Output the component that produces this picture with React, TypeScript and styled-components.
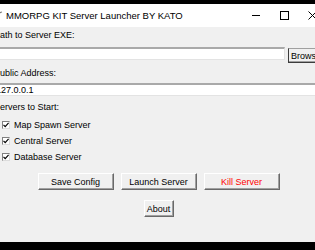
import React from "react";
import styled, { createGlobalStyle } from "styled-components";

const Global = createGlobalStyle`
  html, body { margin: 0; padding: 0; background: #000; }
  body { width: 315px; height: 250px; overflow: hidden; }
  #root { width: 315px; height: 250px; overflow: hidden; }
`;

const Screen = styled.div`
  width: 315px;
  height: 250px;
  overflow: hidden;
  background: #000;
  display: flex;
  flex-direction: column;
  padding-top: 4px;
  box-sizing: border-box;
  font-family: "Liberation Sans Narrow", "Liberation Sans", Arial, sans-serif;
  font-size: 9px;
  color: #000;
`;

const Window = styled.div`
  margin-left: -9px;
  width: 335px;
  height: 238px;
  flex: none;
  background: #f0f0f0;
  display: flex;
  flex-direction: column;
`;

const TitleBar = styled.div`
  height: 23px;
  flex: none;
  background: #fff;
  display: flex;
  align-items: center;
  padding-left: 2px;
`;

const AppIcon = styled.svg`
  width: 10px;
  height: 10px;
  margin-right: 3px;
  flex: none;
`;

const TitleText = styled.div`
  flex: 1;
  font-size: 9.5px;
  line-height: 12px;
  white-space: nowrap;
`;

const Control = styled.div`
  width: 28px;
  height: 23px;
  display: flex;
  align-items: center;
  justify-content: center;
  flex: none;
`;

const MinLine = styled.div`
  width: 8px;
  height: 1px;
  background: #000;
`;

const MaxBox = styled.div`
  width: 7px;
  height: 7px;
  border: 1px solid #000;
`;

const Content = styled.div`
  display: flex;
  flex-direction: column;
  padding: 2px 3px 0 3px;
`;

const Label = styled.div<{ $mt: number }>`
  margin-top: ${(p) => p.$mt}px;
  height: 12px;
  line-height: 12px;
  white-space: nowrap;
`;

const EntryRow = styled.div`
  margin-top: 6px;
  display: flex;
  align-items: flex-start;
  gap: 3px;
  height: 16px;
`;

const Entry = styled.div<{ $mt?: number }>`
  margin-top: ${(p) => p.$mt ?? 0}px;
  flex: 1;
  height: 13px;
  box-sizing: border-box;
  background: #fff;
  border-top: 2px solid #a9a9a9;
  border-left: 2px solid #a9a9a9;
  border-bottom: 1px solid #e3e3e3;
  border-right: 1px solid #e3e3e3;
  line-height: 10px;
  padding-left: 0px;
  white-space: nowrap;
  overflow: hidden;
`;

const RaisedButton = styled.div<{ $w: number; $danger?: boolean }>`
  width: ${(p) => p.$w}px;
  height: 17px;
  box-sizing: border-box;
  background: #f0f0f0;
  border: 1px solid;
  border-color: #fff #696969 #696969 #fff;
  box-shadow: inset -1px -1px 0 #a0a0a0;
  display: flex;
  align-items: center;
  justify-content: center;
  line-height: 12px;
  color: ${(p) => (p.$danger ? "#ff0000" : "#000")};
  white-space: nowrap;
  flex: none;
`;

const BrowseButton = styled(RaisedButton)`
  margin-top: 1px;
  height: 15px;
  border-color: #a0a0a0 #696969 #3c3c3c #3c3c3c;
  justify-content: flex-start;
  padding-left: 2px;
`;

const CheckRow = styled.div<{ $mt?: number }>`
  margin-top: ${(p) => p.$mt ?? 0}px;
  height: 16px;
  display: flex;
  align-items: center;
  gap: 4px;
  padding-left: 8px;
`;

const CheckBox = styled.div`
  width: 8px;
  height: 8px;
  box-sizing: border-box;
  background: #fff;
  border-top: 1px solid #808080;
  border-left: 1px solid #808080;
  border-bottom: 1px solid #dcdcdc;
  border-right: 1px solid #dcdcdc;
  display: flex;
  align-items: center;
  justify-content: center;
  flex: none;
`;

const ButtonRow = styled.div`
  margin-top: 8px;
  display: flex;
  justify-content: center;
  gap: 7px;
`;

const AboutRow = styled.div`
  margin-top: 10px;
  display: flex;
  justify-content: center;
`;

const Check = ({ label, mt }: { label: string; mt?: number }) => (
  <CheckRow $mt={mt}>
    <CheckBox>
      <svg width="6" height="6" viewBox="0 0 6 6">
        <path d="M0.5 2.8 L2.2 4.6 L5.6 0.9" stroke="#000" strokeWidth="1.2" fill="none" />
      </svg>
    </CheckBox>
    <span>{label}</span>
  </CheckRow>
);

export default function App() {
  return (
    <Screen>
      <Global />
      <Window>
        <TitleBar>
          <AppIcon viewBox="0 0 10 10">
            <path d="M9 1 C5 2 3 5 2 9" stroke="#7a7a7a" strokeWidth="1.2" fill="none" />
          </AppIcon>
          <TitleText>MMORPG KIT Server Launcher BY KATO</TitleText>
          <Control>
            <MinLine />
          </Control>
          <Control>
            <MaxBox />
          </Control>
          <Control>
            <svg width="9" height="9" viewBox="0 0 9 9">
              <path d="M0.5 0.5 L8.5 8.5 M8.5 0.5 L0.5 8.5" stroke="#000" strokeWidth="1" />
            </svg>
          </Control>
        </TitleBar>
        <Content>
          <Label $mt={0}>Path to Server EXE:</Label>
          <EntryRow>
            <Entry />
            <BrowseButton $w={35}>Browse</BrowseButton>
          </EntryRow>
          <Label $mt={4}>Public Address:</Label>
          <Entry $mt={4}>127.0.0.1</Entry>
          <Label $mt={5}>Servers to Start:</Label>
          <Check label="Map Spawn Server" mt={4} />
          <Check label="Central Server" />
          <Check label="Database Server" />
          <ButtonRow>
            <RaisedButton $w={76}>Save Config</RaisedButton>
            <RaisedButton $w={76}>Launch Server</RaisedButton>
            <RaisedButton $w={76} $danger>
              Kill Server
            </RaisedButton>
          </ButtonRow>
          <AboutRow>
            <RaisedButton $w={30}>About</RaisedButton>
          </AboutRow>
        </Content>
      </Window>
    </Screen>
  );
}
